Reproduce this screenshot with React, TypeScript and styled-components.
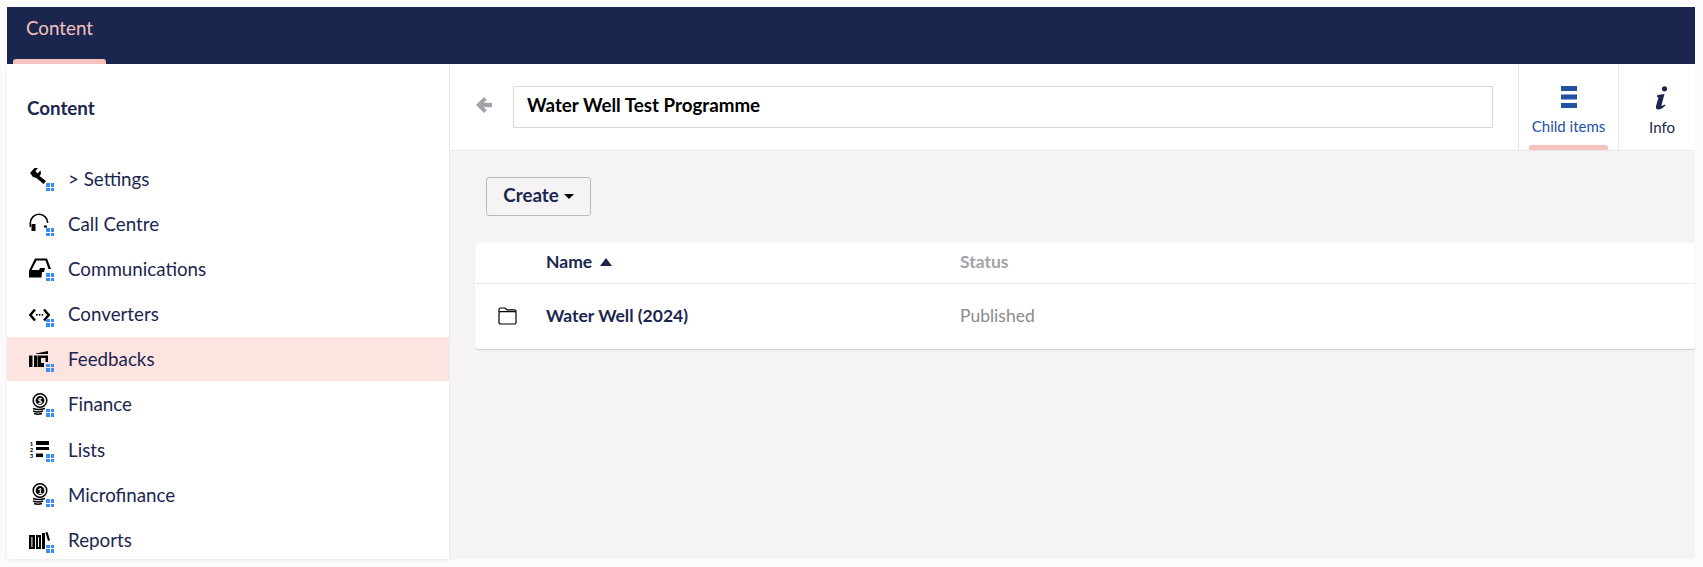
import React from 'react';
import styled, {createGlobalStyle} from 'styled-components';

const GlobalStyle = createGlobalStyle`
  html, body {
    margin: 0;
    padding: 0;
    background: #fbfbfb;
    overflow: hidden;
  }
  * {
    box-sizing: border-box;
  }
  body {
    font-family: Lato, "Open Sans", sans-serif;
    color: #1b264f;
  }
`;

const Shell = styled.div`
  width: 1703px;
  height: 567px;
  padding: 7px 8px 8px 7px;
  display: flex;
  flex-direction: column;
`;

const TopBar = styled.header`
  height: 57px;
  background: #1b264f;
  display: flex;
  flex: none;
`;

const Section = styled.a`
  width: 93px;
  margin-left: 6px;
  padding: 10px 0 0 13px;
  font-size: 18.75px;
  line-height: 22px;
  color: #f5c1bc;
  position: relative;
  &::after {
    content: '';
    position: absolute;
    left: 0;
    right: 0;
    bottom: 0;
    height: 5px;
    background: #f5c1bc;
    border-radius: 3px 3px 0 0;
  }
`;

const Body = styled.div`
  flex: 1;
  display: flex;
  min-height: 0;
`;

const Sidebar = styled.nav`
  width: 443px;
  flex: none;
  background: #fff;
  border-right: 1px solid #e9e9eb;
  box-shadow: 0 1px 3px rgba(0, 0, 0, 0.08);
  display: flex;
  flex-direction: column;
  overflow: hidden;
`;

const SidebarTitle = styled.h3`
  margin: 0;
  padding: 32px 0 0 20px;
  height: 92px;
  flex: none;
  font-size: 18.75px;
  line-height: 24px;
  font-weight: 700;
`;

const TreeRow = styled.div<{$active?: boolean}>`
  height: 44px;
  flex: none;
  margin-bottom: 1.2px;
  display: flex;
  align-items: center;
  padding-left: 21px;
  gap: 16px;
  font-size: 18.75px;
  background: ${(p) => (p.$active ? '#fee4e1' : 'transparent')};
`;

const IconBox = styled.span`
  position: relative;
  width: 24px;
  height: 24px;
  flex: none;
  color: #000;
  svg {
    display: block;
  }
`;

const Badge = styled.span`
  position: absolute;
  right: -2px;
  bottom: -1px;
  width: 8px;
  height: 8px;
  display: grid;
  grid-template-columns: 3.5px 3.5px;
  grid-auto-rows: 3.5px;
  gap: 1px;
  & > i {
    background: #3b8cf5;
  }
`;

const Main = styled.main`
  flex: 1;
  display: flex;
  flex-direction: column;
  background: #f5f3f4;
  min-width: 0;
`;

const EditorHeader = styled.div`
  height: 87px;
  flex: none;
  background: #fff;
  border-bottom: 1px solid #e9e9eb;
  display: flex;
  align-items: stretch;
`;

const BackButton = styled.span`
  width: 63px;
  flex: none;
  display: flex;
  align-items: center;
  justify-content: flex-end;
  padding: 0 21px 5px 0;
`;

const NameInput = styled.input`
  width: 980px;
  height: 42px;
  margin-top: 22px;
  border: 1px solid #d8d7d9;
  padding: 0 13px 6px;
  font-family: inherit;
  font-size: 18.75px;
  font-weight: 700;
  color: #000;
  background: #fff;
  outline: none;
`;

const Apps = styled.div`
  margin-left: auto;
  display: flex;
`;

const AppLink = styled.a<{$active?: boolean; $width: number; $inset?: number}>`
  width: ${(p) => p.$width}px;
  border-left: 1px solid #e9e9eb;
  display: flex;
  flex-direction: column;
  align-items: center;
  padding: 22px 0 0 ${(p) => p.$inset ?? 0}px;
  position: relative;
  font-size: 15px;
  color: ${(p) => (p.$active ? '#2152a3' : '#1b264f')};
  span {
    margin-top: 7px;
    line-height: 20px;
  }
  &::after {
    content: '';
    display: ${(p) => (p.$active ? 'block' : 'none')};
    position: absolute;
    left: 10px;
    right: 10px;
    bottom: 0;
    height: 5px;
    background: #f5c1bc;
    border-radius: 3px 3px 0 0;
  }
`;

const Content = styled.div`
  padding: 26px 0 0 25px;
  display: flex;
  flex-direction: column;
`;

const CreateButton = styled.button`
  align-self: flex-start;
  margin-left: 11px;
  width: 105px;
  height: 39px;
  border: 1px solid #bbbabf;
  border-radius: 3px;
  background: #f5f3f4;
  color: #1b264f;
  font-family: inherit;
  font-size: 18.75px;
  font-weight: 700;
  display: flex;
  align-items: center;
  justify-content: center;
  gap: 5px;
  padding: 0 0 4px;
`;

const Caret = styled.i`
  width: 0;
  height: 0;
  border-left: 5px solid transparent;
  border-right: 5px solid transparent;
  border-top: 5px solid #000;
  margin-top: 3px;
`;

const Table = styled.div`
  margin-top: 27px;
  background: #fff;
  border-radius: 3px;
  box-shadow: 0 1px 1px rgba(0, 0, 0, 0.16);
`;

const TableRow = styled.div<{$head?: boolean}>`
  display: grid;
  grid-template-columns: 71px 414px 1fr;
  align-items: center;
  height: ${(p) => (p.$head ? '41px' : '65px')};
  padding-bottom: ${(p) => (p.$head ? '3px' : '2px')};
  border-bottom: ${(p) => (p.$head ? '1px solid #e9e9eb' : 'none')};
`;

const FolderCell = styled.span`
  padding-left: 23px;
  color: #000;
  display: flex;
  svg {
    display: block;
  }
`;

const NameHead = styled.span`
  font-size: 17.5px;
  font-weight: 700;
  display: flex;
  align-items: center;
  gap: 8px;
`;

const SortArrow = styled.i`
  width: 0;
  height: 0;
  border-left: 6px solid transparent;
  border-right: 6px solid transparent;
  border-bottom: 8px solid #1b264f;
`;

const StatusHead = styled.span`
  font-size: 17.5px;
  font-weight: 700;
  color: #a3a2a8;
`;

const NameCell = styled.span`
  font-size: 17.5px;
  font-weight: 700;
`;

const StatusCell = styled.span`
  font-size: 17.5px;
  color: #8b8a90;
`;

const Coin = ({mark}: {mark: string}) => (
  <>
    <circle cx="12" cy="8.5" r="6.8" fill="none" stroke="currentColor" strokeWidth="1.5" />
    <circle cx="12" cy="8.5" r="4.4" />
    <text x="12" y="11.5" fontSize="8" fontWeight="700" fontFamily="Lato" fill="#fff" textAnchor="middle">
      {mark}
    </text>
    <path
      d="M5 16.5 Q10 18.5 17 16.5 M5 19 Q10 21 15 19 M6 21.5 Q10 23 14 21.5"
      fill="none"
      stroke="currentColor"
      strokeWidth="1.4"
    />
  </>
);

const icons: Record<string, React.ReactNode> = {
  wrench: (
    <path d="M2 7 L6.5 2 L10 2 L7.5 5 L9.5 7.5 L12.5 4.5 L13 8 L11.5 10 L18 15 L15.5 18 L8.5 12 L5 11 Z" />
  ),
  headset: (
    <>
      <path
        d="M2.3 16 V12 A8.7 8.7 0 0 1 19.7 12"
        fill="none"
        stroke="currentColor"
        strokeWidth="1.6"
      />
      <rect x="3.5" y="13" width="4" height="7" />
      <rect x="16" y="14.5" width="3" height="2" />
    </>
  ),
  inbox: (
    <path d="M7 2.5 H19 L23 13 H20.5 L17.5 4.5 H8.5 L3.5 14 H11 L12 12 H17 L16 16 H14 L13.5 21.5 H1 V14.5 Z" />
  ),
  converter: (
    <>
      <path
        d="M7 7.5 L2.3 13 L7 18.5 M16 7.5 L20.7 13 L16 18.5"
        fill="none"
        stroke="currentColor"
        strokeWidth="2.5"
      />
      <rect x="8" y="12" width="1.6" height="1.6" />
      <rect x="10.8" y="12" width="1.6" height="1.6" />
      <rect x="13.6" y="12" width="1.6" height="1.6" />
    </>
  ),
  feedback: (
    <>
      <path d="M8 6.5 L20 4 V7 H8 Z" />
      <rect x="1" y="8.5" width="3.5" height="11.5" />
      <rect x="6" y="8.5" width="3.5" height="11.5" />
      <path d="M10 8.5 H20 V15 H17.5 V11 H13 V16 H16 V20 H10 Z" />
    </>
  ),
  finance: <Coin mark="$" />,
  micro: <Coin mark="1" />,
  lists: (
    <>
      <rect x="8" y="4" width="13" height="4" />
      <rect x="8" y="10" width="13" height="3" />
      <rect x="8" y="16.5" width="7" height="3.6" />
      <text x="3.5" y="9" fontSize="6" fontWeight="700" fontFamily="Lato" textAnchor="middle">1</text>
      <text x="3.5" y="15" fontSize="6" fontWeight="700" fontFamily="Lato" textAnchor="middle">2</text>
      <text x="3.5" y="21" fontSize="6" fontWeight="700" fontFamily="Lato" textAnchor="middle">3</text>
    </>
  ),
  books: (
    <>
      <rect x="1" y="7" width="6" height="14" />
      <rect x="3.4" y="9" width="1" height="10" fill="#fff" />
      <rect x="8" y="7" width="5" height="14" />
      <rect x="10" y="9" width="1" height="10" fill="#fff" />
      <rect x="14" y="5" width="3" height="16" />
      <path d="M17.5 4.5 L19.5 4 L22 12 L20 13 Z" />
    </>
  ),
};

const tree = [
  {label: '> Settings', icon: 'wrench'},
  {label: 'Call Centre', icon: 'headset'},
  {label: 'Communications', icon: 'inbox'},
  {label: 'Converters', icon: 'converter'},
  {label: 'Feedbacks', icon: 'feedback', active: true},
  {label: 'Finance', icon: 'finance'},
  {label: 'Lists', icon: 'lists'},
  {label: 'Microfinance', icon: 'micro'},
  {label: 'Reports', icon: 'books'},
];

export default function App() {
  return (
    <Shell>
      <GlobalStyle />
      <TopBar>
        <Section>Content</Section>
      </TopBar>
      <Body>
        <Sidebar>
          <SidebarTitle>Content</SidebarTitle>
          {tree.map((item) => (
            <TreeRow key={item.label} $active={item.active}>
              <IconBox>
                <svg width="24" height="24" viewBox="0 0 24 24" fill="currentColor">
                  {icons[item.icon]}
                </svg>
                <Badge>
                  <i />
                  <i />
                  <i />
                  <i />
                </Badge>
              </IconBox>
              {item.label}
            </TreeRow>
          ))}
        </Sidebar>
        <Main>
          <EditorHeader>
            <BackButton>
              <svg width="16" height="16" viewBox="0 0 16 16" fill="#a3a2a8">
                <path d="M8 0 L11 3 L7.5 5.8 H16 V10.2 H7.5 L11 13 L8 16 L0 8 Z" />
              </svg>
            </BackButton>
            <NameInput readOnly value="Water Well Test Programme" />
            <Apps>
              <AppLink $active $width={100}>
                <svg width="16" height="23" viewBox="0 0 16 23" fill="#2152a3">
                  <rect width="16" height="5" y="0" />
                  <rect width="16" height="5" y="8.5" />
                  <rect width="16" height="5" y="17" />
                </svg>
                <span>Child items</span>
              </AppLink>
              <AppLink $width={77} $inset={10}>
                <svg width="14" height="24" viewBox="0 0 12 24" fill="#1b264f">
                  <circle cx="8.5" cy="2.8" r="2.6" />
                  <path d="M1.5 9 L8.5 8 L5.5 19 Q5.5 21 8.5 18.5 L9.5 19.5 Q5 24 1.5 23.5 Q-0.5 23 0 20 L2.5 11.5 L1 11 Z" />
                </svg>
                <span>Info</span>
              </AppLink>
            </Apps>
          </EditorHeader>
          <Content>
            <CreateButton>
              Create
              <Caret />
            </CreateButton>
            <Table>
              <TableRow $head>
                <span />
                <NameHead>
                  Name
                  <SortArrow />
                </NameHead>
                <StatusHead>Status</StatusHead>
              </TableRow>
              <TableRow>
                <FolderCell>
                  <svg width="19" height="18" viewBox="0 0 19 18" fill="none" stroke="#000" strokeWidth="1.2">
                    <path d="M1 5 V2.5 Q1 1 2.5 1 H7 L9 2.8 H16.5 Q18 2.8 18 4.3 V5" />
                    <rect x="1" y="4.6" width="17" height="12.4" rx="1.6" />
                  </svg>
                </FolderCell>
                <NameCell>Water Well (2024)</NameCell>
                <StatusCell>Published</StatusCell>
              </TableRow>
            </Table>
          </Content>
        </Main>
      </Body>
    </Shell>
  );
}
